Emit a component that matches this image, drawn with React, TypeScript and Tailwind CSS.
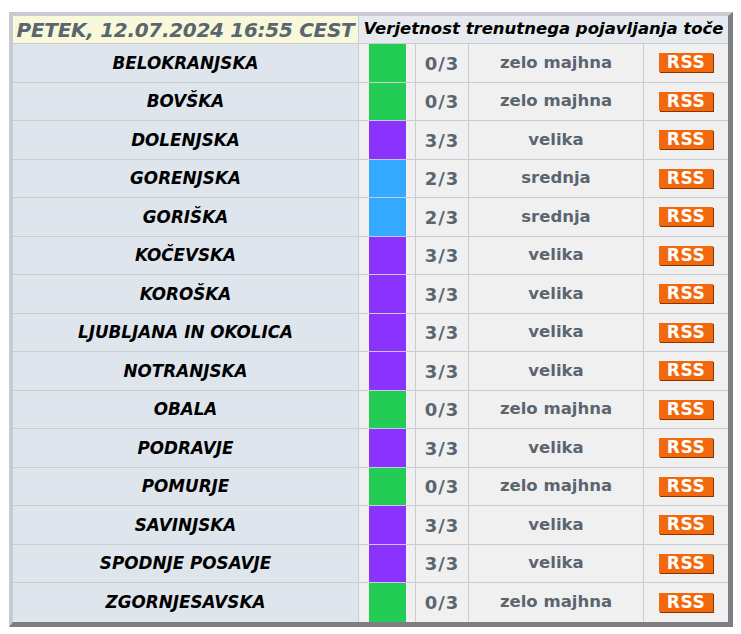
const rows: [string, string, string, string][] = [
  ["BELOKRANJSKA", "g", "0/3", "zelo majhna"],
  ["BOVŠKA", "g", "0/3", "zelo majhna"],
  ["DOLENJSKA", "p", "3/3", "velika"],
  ["GORENJSKA", "b", "2/3", "srednja"],
  ["GORIŠKA", "b", "2/3", "srednja"],
  ["KOČEVSKA", "p", "3/3", "velika"],
  ["KOROŠKA", "p", "3/3", "velika"],
  ["LJUBLJANA IN OKOLICA", "p", "3/3", "velika"],
  ["NOTRANJSKA", "p", "3/3", "velika"],
  ["OBALA", "g", "0/3", "zelo majhna"],
  ["PODRAVJE", "p", "3/3", "velika"],
  ["POMURJE", "g", "0/3", "zelo majhna"],
  ["SAVINJSKA", "p", "3/3", "velika"],
  ["SPODNJE POSAVJE", "p", "3/3", "velika"],
  ["ZGORNJESAVSKA", "g", "0/3", "zelo majhna"],
];

const swatch: Record<string, string> = {
  g: "bg-[#22cc55]",
  p: "bg-[#8a33ff]",
  b: "bg-[#33aaff]",
};

export default function App() {
  return (
    <div className="min-h-[634px] bg-white pl-[9px] pt-[12px] font-['DejaVu_Sans',sans-serif]">
      <div className="w-[724px] border-l-4 border-t-4 border-r-[5px] border-b-[5px] border-l-[#c6cbd1] border-t-[#c6cbd1] border-r-[#7b7f84] border-b-[#7b7f84] bg-[#f0f0f0]">

        {/* Header */}

        <div className="flex h-[28px] border-b border-[#c9cdd2]">
          <div className="flex w-[346px] items-center justify-center border-r border-[#c9cdd2] bg-[#f8f8da] text-[20px] font-bold italic tracking-[-0.3px] text-[#5b6570]">
            PETEK, 12.07.2024 16:55 CEST
          </div>
          <div className="flex flex-1 items-center justify-center bg-[#e6eaee] text-[16.5px] font-bold italic text-black">
            Verjetnost trenutnega pojavljanja toče
          </div>
        </div>

        {/* Rows */}

        {rows.map(([name, c, num, label]) => (
          <div key={name} className="flex h-[38.5px] border-b border-[#c9cdd2] last:border-b-0">
            <div className="flex w-[346px] items-center justify-center border-r border-[#c9cdd2] bg-[#dfe5ec] pt-px text-[16.8px] font-bold italic text-black">
              {name}
            </div>
            <div className="flex w-[57px] justify-center border-r border-[#c9cdd2]">
              <div className={`h-full w-[37px] ${swatch[c]}`} />
            </div>
            <div className="flex w-[53px] items-center justify-center border-r border-[#c9cdd2] pt-px text-[18px] font-bold tracking-[1px] text-[#5b6570]">
              {num}
            </div>
            <div className="flex w-[175px] items-center justify-center border-r border-[#c9cdd2] pt-px text-[16.5px] font-bold text-[#5b6570]">
              {label}
            </div>
            <div className="flex flex-1 items-center justify-center">
              <span className="flex h-[19px] w-[54px] items-center justify-center bg-[#f2680c] text-[17px] font-bold leading-none tracking-[0.5px] text-white shadow-[1px_1px_0_#8a3300]">
                RSS
              </span>
            </div>
          </div>
        ))}

      </div>
    </div>
  );
}
